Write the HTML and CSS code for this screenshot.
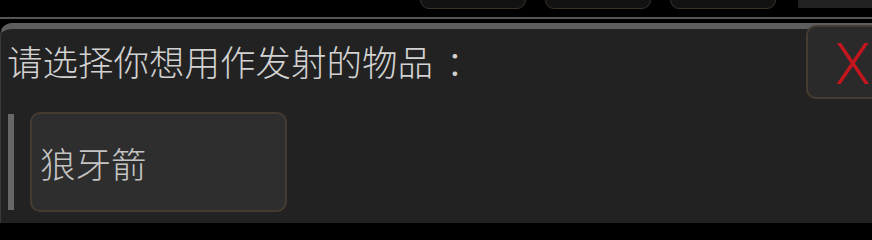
FILE: index.html
```html
<!DOCTYPE html>
<html lang="zh-CN">
<head>
<meta charset="utf-8">
<title>选择发射物品</title>
<link rel="stylesheet" href="styles.css">
</head>
<body>
<div class="topbar">
  <div class="tab"></div>
  <div class="tab"></div>
  <div class="tab"></div>
  <div class="corner"></div>
</div>
<div class="rule"></div>
<div class="panel">
  <h1 class="title">请选择你想用作发射的物品<span class="colon">：</span></h1>
  <div class="items">
    <div class="marker"></div>
    <button class="item">狼牙箭</button>
  </div>
  <button class="close">X</button>
</div>
</body>
</html>
```
FILE: styles.css
```css
html, body {
  margin: 0;
  padding: 0;
  background: #000;
  width: 872px;
  height: 223px;
  overflow: hidden;
  font-family: "Noto Sans CJK SC", "Noto Sans", sans-serif;
}

body {
  display: flex;
  flex-direction: column;
}

.topbar {
  height: 17px;
  display: flex;
  align-items: flex-end;
  overflow: hidden;
  padding-left: 420px;
  box-sizing: border-box;
  flex: none;
}

.tab {
  width: 106px;
  height: 30px;
  margin-bottom: 8px;
  margin-right: 19px;
  background: #121212;
  border: 1px solid #3a3128;
  border-radius: 0 0 9px 9px;
  box-sizing: border-box;
  flex: none;
}

.corner {
  align-self: flex-start;
  margin-left: 3px;
  width: 80px;
  height: 8px;
  background: #222;
  flex: none;
}

.rule {
  height: 2px;
  background: #555;
  margin-bottom: 4px;
  flex: none;
}

.panel {
  position: relative;
  flex: 1;
  background: #222;
  border-top: 6px solid #5e5e5e;
  border-left: 1px solid #3a3a3a;
  border-top-left-radius: 12px;
  padding: 12px 0 0 6px;
  box-sizing: border-box;
}

.title {
  margin: 0;
  font-weight: 300;
  font-size: 35.5px;
  line-height: 40px;
  color: #d2d2d2;
  letter-spacing: 0;
}

.colon {
  font-family: "Noto Sans CJK TC", "Noto Sans CJK SC", sans-serif;
  margin-left: 13px;
}

.items {
  display: flex;
  align-items: center;
  margin-top: 31px;
  gap: 16px;
}

.marker {
  width: 6px;
  height: 96px;
  background: #676767;
  margin-left: 1px;
}

.item {
  width: 257px;
  height: 100px;
  background: #2e2e2e;
  border: 2px solid #463b31;
  border-radius: 10px;
  color: #c4c4c4;
  font-family: "Noto Sans CJK SC", "Noto Sans", sans-serif;
  font-weight: 300;
  font-size: 35.5px;
  text-align: left;
  padding: 0 0 0 8px;
  box-sizing: border-box;
}

.close {
  position: absolute;
  top: -4px;
  left: 805px;
  width: 90px;
  height: 74px;
  background: #2a2a2a;
  border: 2px solid #463c32;
  border-radius: 10px;
  color: #c4161c;
  font-family: Roboto, "Liberation Sans", sans-serif;
  font-weight: 300;
  font-size: 58px;
  line-height: 1;
  text-align: left;
  padding: 4px 0 0 27px;
  box-sizing: border-box;
}
```
